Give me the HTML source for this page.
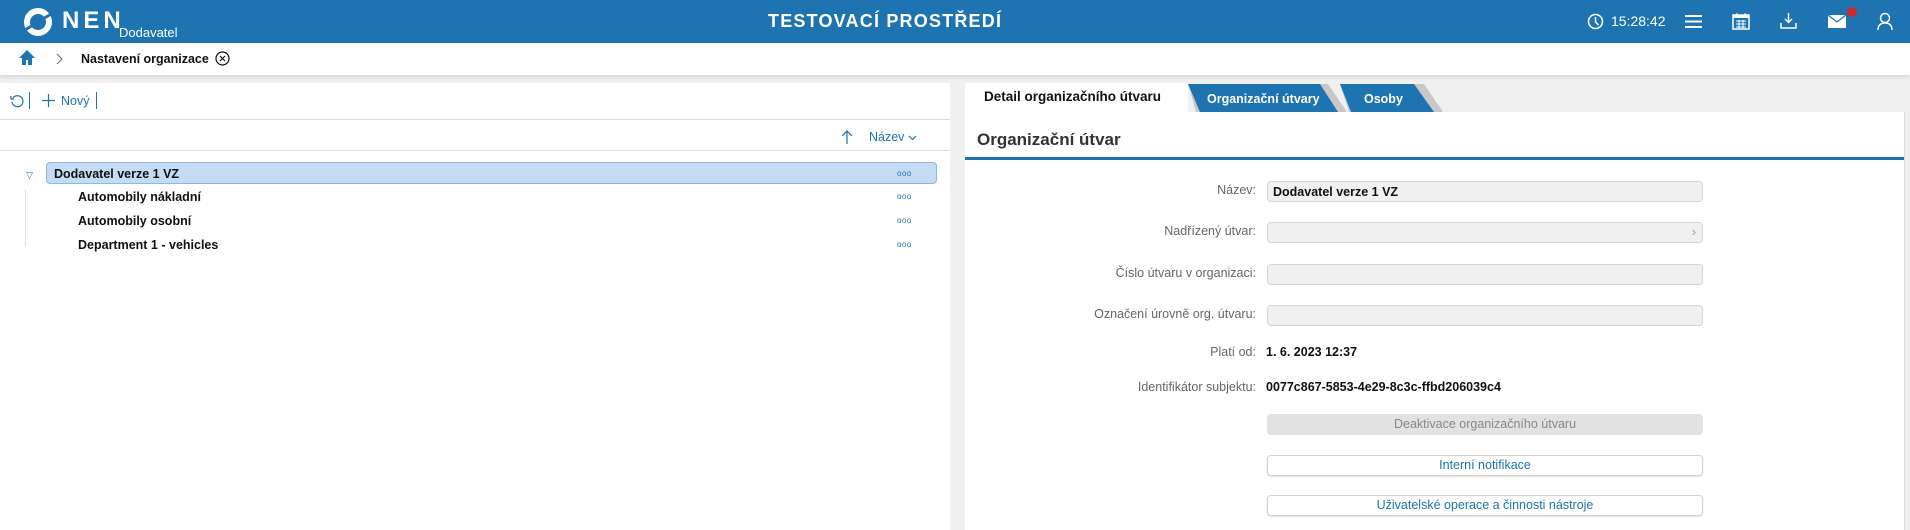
<!DOCTYPE html>
<html><head><meta charset="utf-8"><style>
*{box-sizing:border-box;margin:0;padding:0}
body{width:1910px;height:530px;overflow:hidden;background:#f0f0f0;font-family:"Liberation Sans",sans-serif;position:relative;color:#111}
.a{position:absolute}
.hdr{left:0;top:0;width:1910px;height:43px;background:#1e74b1;color:#fff}
.bc{left:0;top:43px;width:1910px;height:32px;background:#fff;box-shadow:0 2px 4px rgba(0,0,0,.12)}
.lp{left:0;top:83px;width:950px;height:447px;background:#fff}
.rp{left:965px;top:112px;width:939px;height:418px;background:#fff}
.lbl{width:250px;text-align:right;font-size:12.5px;color:#666;left:1006px}
.inp{left:1267px;width:436px;height:21px;background:#f0f0f0;border:1px solid #d6d6d6;border-radius:4px;font-size:12.5px;font-weight:bold;padding:3px 5px;color:#111}
.btn{left:1267px;width:436px;height:21px;border:1px solid #d4d4d4;border-radius:4px;background:#fff;font-size:12.5px;color:#1e74b1;text-align:center;line-height:19px;box-shadow:0 1px 2px rgba(0,0,0,.12)}
.row{font-size:12.5px;font-weight:bold}
.dots{font-size:8px;color:#1e74b1;letter-spacing:0.5px}
</style></head><body>
<div class="a hdr">
 <svg class="a" style="left:22px;top:6px" width="32" height="32" viewBox="0 0 32 32"><circle cx="16" cy="16" r="11" fill="none" stroke="#fff" stroke-width="6"/><path d="M3 24 L29 8" stroke="#1e74b1" stroke-width="3"/></svg>
 <div class="a" style="left:62px;top:7px;font-size:24px;font-weight:bold;letter-spacing:4px">NEN</div>
 <div class="a" style="left:119px;top:25px;font-size:13px">Dodavatel</div>
 <div class="a" style="left:768px;top:11px;font-size:18px;font-weight:bold;letter-spacing:1.2px">TESTOVACÍ PROSTŘEDÍ</div>
 <svg class="a" style="left:1587px;top:13px" width="17" height="17" viewBox="0 0 17 17"><circle cx="8.5" cy="8.5" r="7" fill="none" stroke="#fff" stroke-width="1.5"/><path d="M8.5 4v5l3 3" fill="none" stroke="#fff" stroke-width="1.5"/></svg>
 <div class="a" style="left:1611px;top:13px;font-size:14px">15:28:42</div>
 <svg class="a" style="left:1685px;top:14px" width="17" height="15"><path d="M0 2h17M0 7.5h17M0 13h17" stroke="#fff" stroke-width="2"/></svg>
 <svg class="a" style="left:1732px;top:12px" width="18" height="18"><rect x="1" y="3" width="16" height="14" fill="none" stroke="#fff" stroke-width="1.5"/><rect x="1" y="3" width="16" height="3" fill="#fff"/><path d="M5 1v4M13 1v4M4 9h10M4 12h10M4 15h10M7 8v8M11 8v8" stroke="#fff" stroke-width="1"/></svg>
 <svg class="a" style="left:1780px;top:12px" width="17" height="18"><path d="M8.5 1v9M5 7l3.5 3.5L12 7" fill="none" stroke="#fff" stroke-width="1.5"/><path d="M1 11v5h15v-5" fill="none" stroke="#fff" stroke-width="1.5"/></svg>
 <svg class="a" style="left:1828px;top:15px" width="18" height="13"><rect x="0" y="0" width="18" height="13" fill="#fff"/><path d="M0 0l9 7 9-7" fill="none" stroke="#1e74b1" stroke-width="1.2"/></svg>
 <div class="a" style="left:1847px;top:7px;width:10px;height:10px;border-radius:50%;background:#d0282e"></div>
 <svg class="a" style="left:1877px;top:12px" width="16" height="18"><circle cx="8" cy="6" r="4.5" fill="none" stroke="#fff" stroke-width="1.5"/><path d="M1 18c0-5 3-7 7-7s7 2 7 7" fill="none" stroke="#fff" stroke-width="1.5"/></svg>
</div>
<div class="a bc">
 <svg class="a" style="left:18px;top:6px" width="18" height="17"><path d="M9 1L1 9h3v7h4v-5h2v5h4V9h3z" fill="#1e74b1"/></svg>
 <svg class="a" style="left:56px;top:10px" width="8" height="12"><path d="M1 1l5 5-5 5" fill="none" stroke="#777" stroke-width="1.2"/></svg>
 <div class="a" style="left:81px;top:9px;font-size:12.5px;font-weight:bold">Nastavení organizace</div>
 <svg class="a" style="left:215px;top:8px" width="15" height="15"><circle cx="7.5" cy="7.5" r="6.5" fill="none" stroke="#111" stroke-width="1.2"/><path d="M5 5l5 5M10 5l-5 5" stroke="#111" stroke-width="1.2"/></svg>
</div>
<div class="a lp">
 <svg class="a" style="left:10px;top:11px" width="14" height="14"><path d="M3 4A5.5 5.5 0 1 1 2 8" fill="none" stroke="#1e74b1" stroke-width="1.2"/><path d="M1 2v3h3" fill="none" stroke="#1e74b1" stroke-width="1.2"/></svg>
 <div class="a" style="left:29px;top:9px;width:1px;height:17px;background:#1e74b1"></div>
 <svg class="a" style="left:42px;top:11px" width="13" height="13"><path d="M6.5 0v13M0 6.5h13" stroke="#1e74b1" stroke-width="1.2"/></svg>
 <div class="a" style="left:61px;top:11px;font-size:12.5px;color:#1e74b1">Nový</div>
 <div class="a" style="left:96px;top:9px;width:1px;height:17px;background:#1e74b1"></div>
 <div class="a" style="left:0;top:36px;width:950px;height:1px;background:#ddd"></div>
 <svg class="a" style="left:841px;top:47px" width="12" height="14"><path d="M6 1v13M1 6l5-5 5 5" fill="none" stroke="#1e74b1" stroke-width="1.2"/></svg>
 <div class="a" style="left:869px;top:47px;font-size:12.5px;color:#1e74b1">Název</div>
 <svg class="a" style="left:908px;top:52px" width="9" height="6"><path d="M1 1l3.5 3.5L8 1" fill="none" stroke="#1e74b1" stroke-width="1.2"/></svg>
 <div class="a" style="left:0;top:67px;width:950px;height:1px;background:#ddd"></div>
 <div class="a" style="left:26px;top:87px;font-size:9px;color:#1e74b1">▽</div>
 <div class="a" style="left:46px;top:79px;width:891px;height:22px;background:#c4dbf3;border:1px solid #8fb6e0;border-radius:4px"></div>
 <div class="a row" style="left:54px;top:84px">Dodavatel verze 1 VZ</div>
 <div class="a" style="left:25px;top:107px;width:1px;height:57px;background:#ddd"></div>
 <div class="a row" style="left:78px;top:107px">Automobily nákladní</div>
 <div class="a row" style="left:78px;top:131px">Automobily osobní</div>
 <div class="a row" style="left:78px;top:155px">Department 1 - vehicles</div>
 <div class="a dots" style="left:897px;top:86px">ooo</div>
 <div class="a dots" style="left:897px;top:109px">ooo</div>
 <div class="a dots" style="left:897px;top:133px">ooo</div>
 <div class="a dots" style="left:897px;top:157px">ooo</div>
</div>
<div class="a" style="left:965px;top:83px;width:223px;height:30px;background:#fff"></div>
<div class="a" style="left:984px;top:89px;font-size:13.5px;font-weight:bold">Detail organizačního útvaru</div>
<svg class="a" style="left:1188px;top:83px" width="255" height="30"><path d="M0 1L8 29H159L140 1Z" fill="#c8c8c8"/><path d="M0 1H132L150 29H12Z" fill="#1e74b1"/><path d="M152 1L161 29H255L236 1Z" fill="#c8c8c8"/><path d="M152 1H226L246 29H163Z" fill="#1e74b1"/></svg>
<div class="a" style="left:1207px;top:92px;font-size:12.5px;font-weight:bold;color:#fff">Organizační útvary</div>
<div class="a" style="left:1364px;top:92px;font-size:12.5px;font-weight:bold;color:#fff">Osoby</div>
<div class="a rp">
 <div class="a" style="left:12px;top:18px;font-size:17px;font-weight:bold;color:#333">Organizační útvar</div>
 <div class="a" style="left:0;top:45px;width:939px;height:3px;background:#1e74b1"></div>
</div>
<div class="a" style="left:1904px;top:112px;width:6px;height:418px;background:#f0f0f0;border-left:1px solid #ddd"></div>
<div class="a lbl" style="top:183px">Název:</div><div class="a inp" style="top:181px">Dodavatel verze 1 VZ</div>
<div class="a lbl" style="top:224px">Nadřízený útvar:</div><div class="a inp" style="top:222px"><span style="position:absolute;right:6px;top:2px;color:#999;font-weight:normal">›</span></div>
<div class="a lbl" style="top:266px">Číslo útvaru v organizaci:</div><div class="a inp" style="top:264px"></div>
<div class="a lbl" style="top:307px">Označení úrovně org. útvaru:</div><div class="a inp" style="top:305px"></div>
<div class="a lbl" style="top:345px">Platí od:</div><div class="a" style="left:1266px;top:345px;font-size:12.5px;font-weight:bold">1. 6. 2023 12:37</div>
<div class="a lbl" style="top:380px">Identifikátor subjektu:</div><div class="a" style="left:1266px;top:380px;font-size:12.5px;font-weight:bold">0077c867-5853-4e29-8c3c-ffbd206039c4</div>
<div class="a btn" style="top:414px;background:#e2e2e2;color:#888;border-color:#e2e2e2;box-shadow:none">Deaktivace organizačního útvaru</div>
<div class="a btn" style="top:455px">Interní notifikace</div>
<div class="a btn" style="top:495px">Uživatelské operace a činnosti nástroje</div>
</body></html>
